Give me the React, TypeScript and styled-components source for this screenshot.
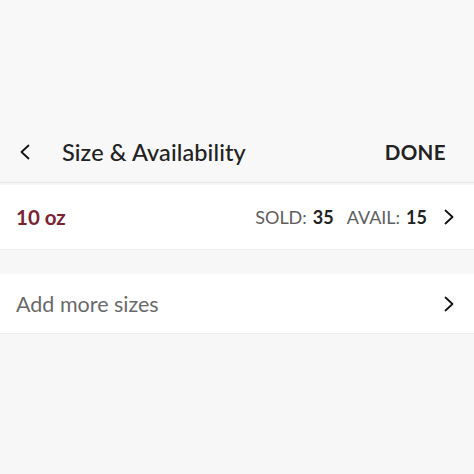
import React from "react";
import styled, { createGlobalStyle } from "styled-components";

const Global = createGlobalStyle`
  html, body { margin: 0; padding: 0; background: #f7f7f7; }
  body { font-family: Lato, "Noto Sans", sans-serif; }
`;

const Page = styled.div`
  width: 474px;
  height: 474px;
  background: #f7f7f7;
  display: flex;
  flex-direction: column;
`;

const Header = styled.header`
  height: 183px;
  box-sizing: border-box;
  display: flex;
  align-items: flex-end;
  padding: 0 28px 12px 20px;
  background: #f8f8f8;
  border-bottom: 1.5px solid #e6e6e6;
`;

const HeaderRow = styled.div`
  flex: 1;
  display: flex;
  align-items: center;
  height: 36px;
`;

const Back = styled.span`
  display: flex;
  width: 22px;
  margin-right: 20px;
`;

const Title = styled.h1`
  margin: 0;
  flex: 1;
  font-size: 23.5px;
  font-weight: 500;
  color: #222;
  letter-spacing: 0.1px;
`;

const Done = styled.span`
  font-size: 20.5px;
  font-weight: 700;
  color: #222;
  letter-spacing: 0.4px;
`;

const Row = styled.div<{ $top: number; $h: number }>`
  margin-top: ${(p) => p.$top}px;
  height: ${(p) => p.$h}px;
  background: #fff;
  display: flex;
  align-items: center;
  padding: 0 20px 0 16px;
  border-bottom: 1px solid #ececec;
  box-sizing: border-box;
`;

const Size = styled.span`
  flex: 1;
  font-size: 20.5px;
  font-weight: 700;
  color: #7a2333;
`;

const Stat = styled.span`
  font-size: 18px;
  color: #5e5e5e;
  margin-left: 13px;
  & b {
    color: #222;
    font-weight: 700;
    margin-left: 6px;
  }
`;

const AddLabel = styled.span`
  flex: 1;
  font-size: 21.5px;
  color: #6a6a6a;
`;

const Chevron = styled.svg`
  width: 10px;
  height: 16px;
  margin-left: 17px;
  flex: none;
`;

const ChevronRight = () => (
  <Chevron viewBox="0 0 10 16">
    <path d="M1.5 1.5 L8.5 8 L1.5 14.5" fill="none" stroke="#111" strokeWidth="1.8" strokeLinecap="round" strokeLinejoin="round" />
  </Chevron>
);

export default function App() {
  return (
    <Page>
      <Global />
      <Header>
        <HeaderRow>
          <Back>
            <svg width="10" height="16" viewBox="0 0 10 16">
              <path d="M8.5 1.5 L1.5 8 L8.5 14.5" fill="none" stroke="#111" strokeWidth="1.8" strokeLinecap="round" strokeLinejoin="round" />
            </svg>
          </Back>
          <Title>Size &amp; Availability</Title>
          <Done>DONE</Done>
        </HeaderRow>
      </Header>
      <Row $top={2} $h={65}>
        <Size>10 oz</Size>
        <Stat>SOLD:<b>35</b></Stat>
        <Stat>AVAIL:<b>15</b></Stat>
        <ChevronRight />
      </Row>
      <Row $top={24} $h={60}>
        <AddLabel>Add more sizes</AddLabel>
        <ChevronRight />
      </Row>
    </Page>
  );
}
